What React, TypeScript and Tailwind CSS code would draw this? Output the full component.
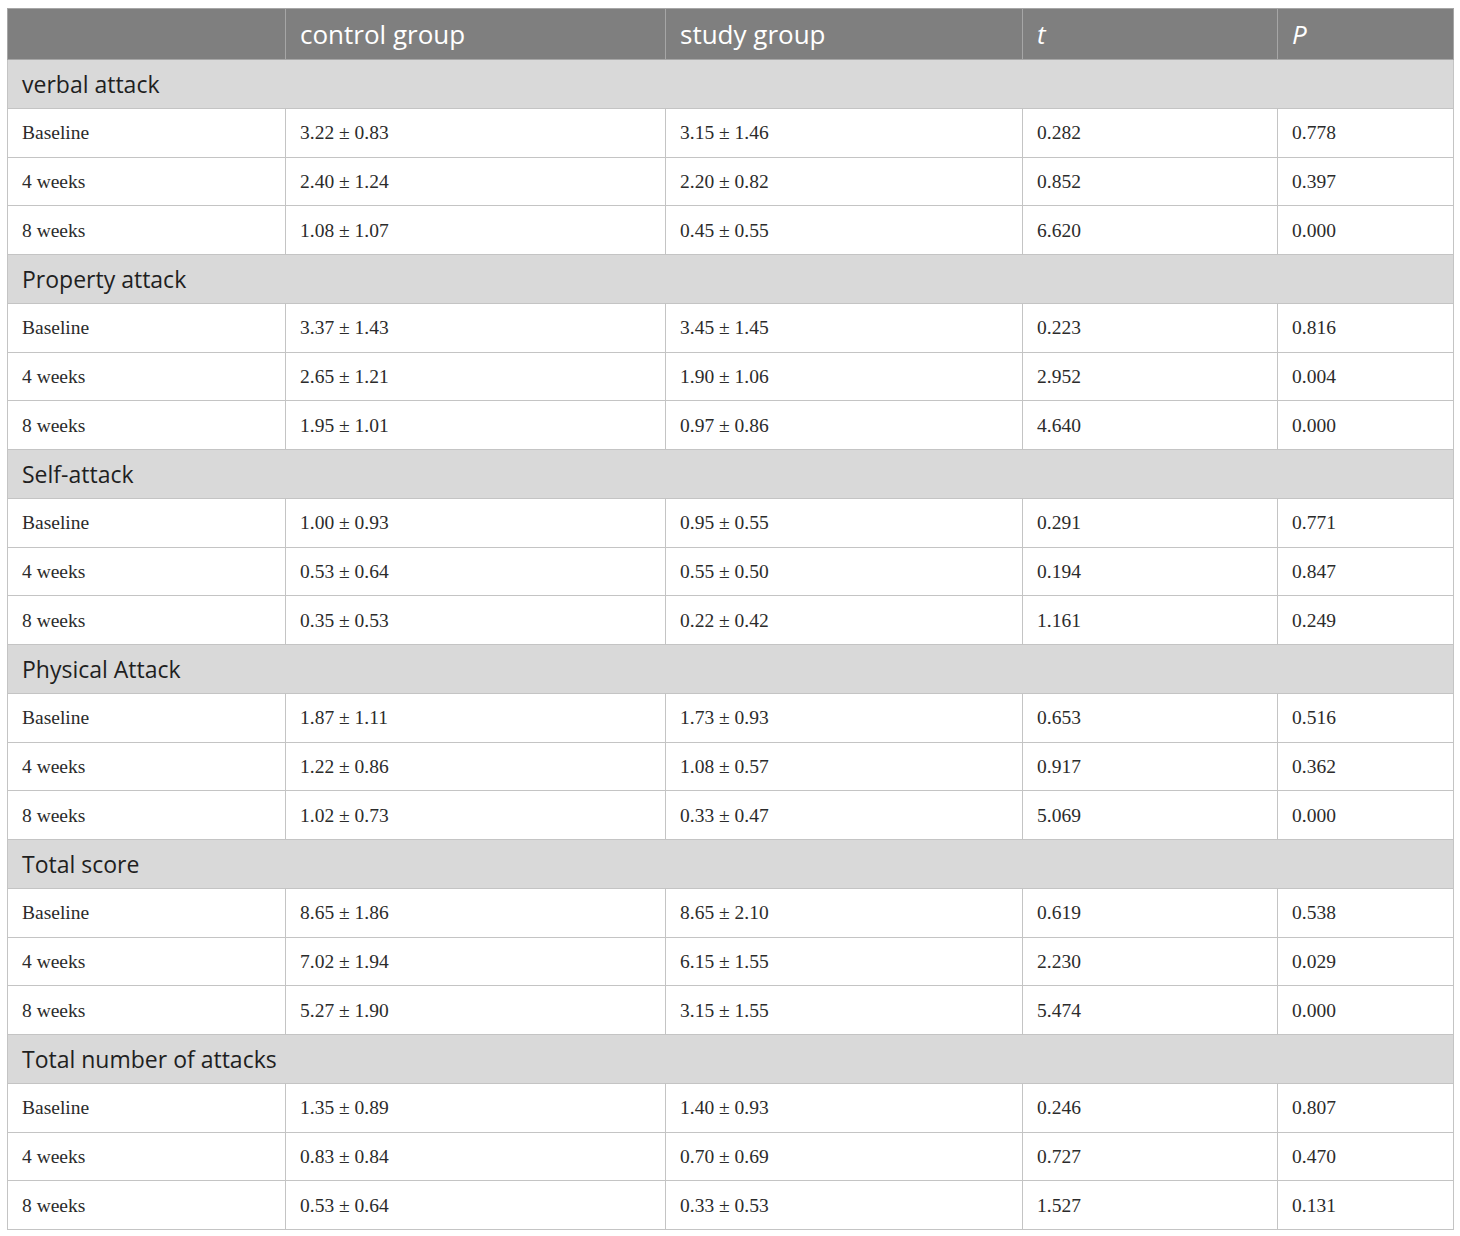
const sections = [
  {
    title: 'verbal attack',
    rows: [
      ['Baseline', '3.22 ± 0.83', '3.15 ± 1.46', '0.282', '0.778'],
      ['4 weeks', '2.40 ± 1.24', '2.20 ± 0.82', '0.852', '0.397'],
      ['8 weeks', '1.08 ± 1.07', '0.45 ± 0.55', '6.620', '0.000'],
    ],
  },
  {
    title: 'Property attack',
    rows: [
      ['Baseline', '3.37 ± 1.43', '3.45 ± 1.45', '0.223', '0.816'],
      ['4 weeks', '2.65 ± 1.21', '1.90 ± 1.06', '2.952', '0.004'],
      ['8 weeks', '1.95 ± 1.01', '0.97 ± 0.86', '4.640', '0.000'],
    ],
  },
  {
    title: 'Self-attack',
    rows: [
      ['Baseline', '1.00 ± 0.93', '0.95 ± 0.55', '0.291', '0.771'],
      ['4 weeks', '0.53 ± 0.64', '0.55 ± 0.50', '0.194', '0.847'],
      ['8 weeks', '0.35 ± 0.53', '0.22 ± 0.42', '1.161', '0.249'],
    ],
  },
  {
    title: 'Physical Attack',
    rows: [
      ['Baseline', '1.87 ± 1.11', '1.73 ± 0.93', '0.653', '0.516'],
      ['4 weeks', '1.22 ± 0.86', '1.08 ± 0.57', '0.917', '0.362'],
      ['8 weeks', '1.02 ± 0.73', '0.33 ± 0.47', '5.069', '0.000'],
    ],
  },
  {
    title: 'Total score',
    rows: [
      ['Baseline', '8.65 ± 1.86', '8.65 ± 2.10', '0.619', '0.538'],
      ['4 weeks', '7.02 ± 1.94', '6.15 ± 1.55', '2.230', '0.029'],
      ['8 weeks', '5.27 ± 1.90', '3.15 ± 1.55', '5.474', '0.000'],
    ],
  },
  {
    title: 'Total number of attacks',
    rows: [
      ['Baseline', '1.35 ± 0.89', '1.40 ± 0.93', '0.246', '0.807'],
      ['4 weeks', '0.83 ± 0.84', '0.70 ± 0.69', '0.727', '0.470'],
      ['8 weeks', '0.53 ± 0.64', '0.33 ± 0.53', '1.527', '0.131'],
    ],
  },
];

const App = () => {
  return (
    <div className="bg-white min-h-[1236px] pt-[8px] pl-[7px]">
      <table className="w-[1446px] table-fixed border-collapse border border-[#c4c4c4]">
        <colgroup>
          <col className="w-[278px]" />
          <col className="w-[380px]" />
          <col className="w-[357px]" />
          <col className="w-[255px]" />
          <col className="w-[176px]" />
        </colgroup>
        {/* Header */}
        <thead>
          <tr className="h-[51px] bg-[#7f7f7f] text-white font-['Open_Sans',sans-serif] text-[26px] text-left">
            <th className="font-normal px-[14px] border border-[#a6a6a6]"></th>
            <th className="font-normal px-[14px] border border-[#a6a6a6]">control group</th>
            <th className="font-normal px-[14px] border border-[#a6a6a6]">study group</th>
            <th className="font-normal italic px-[14px] border border-[#a6a6a6]">t</th>
            <th className="font-normal italic px-[14px] border border-[#a6a6a6]">P</th>
          </tr>
        </thead>
        <tbody>
          {sections.map((section) => (
            <>
              <tr key={section.title} className="h-[48.75px] bg-[#d9d9d9]">
                <td
                  colSpan={5}
                  className="px-[14px] border border-[#c4c4c4] font-['Open_Sans',sans-serif] text-[23px] text-[#1f1f1f]"
                >
                  {section.title}
                </td>
              </tr>
              {section.rows.map((row) => (
                <tr key={section.title + row[0]} className="h-[48.75px] bg-white">
                  {row.map((cell, i) => (
                    <td
                      key={i}
                      className="px-[14px] border border-[#c4c4c4] font-['Liberation_Serif',serif] text-[19.5px] text-[#2b2b2b]"
                    >
                      {cell}
                    </td>
                  ))}
                </tr>
              ))}
            </>
          ))}
        </tbody>
      </table>
    </div>
  );
};

export default App;
